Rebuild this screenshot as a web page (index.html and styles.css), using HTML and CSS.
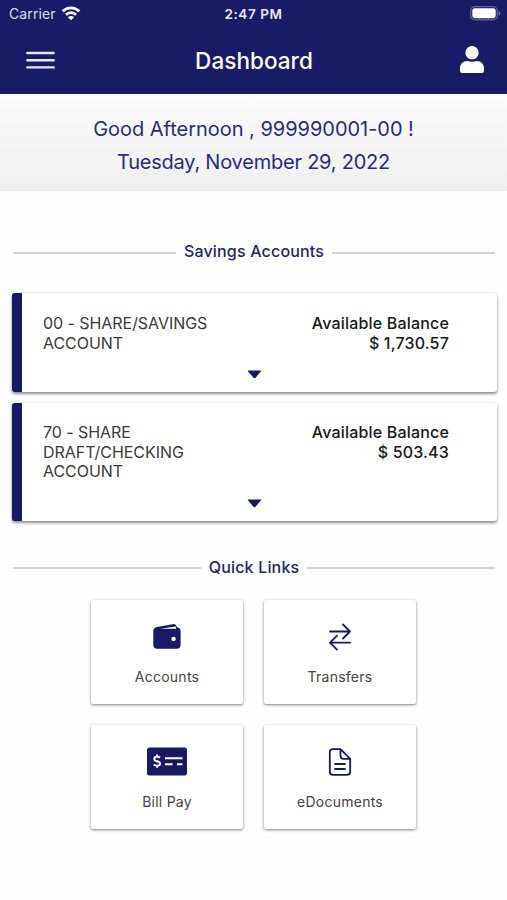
FILE: index.html
```html
<!DOCTYPE html>
<html lang="en">
<head>
<meta charset="utf-8">
<title>Dashboard</title>
<link rel="stylesheet" href="styles.css">
</head>
<body>
<header class="top">
  <div class="status">
    <div class="carrier"><span>Carrier</span>
      <svg class="wifi" width="20" height="15" viewBox="0 0 20 15" fill="none" stroke="currentColor" stroke-width="2.7"><path d="M1.7 5.3A11.8 11.8 0 0 1 18.3 5.3M4.9 8.7A7.2 7.2 0 0 1 15.1 8.7"/><path d="M10 14.3 6.9 11.2A4.4 4.4 0 0 1 13.1 11.2Z" fill="currentColor" stroke="none"/></svg>
    </div>
    <div class="clock">2:47 PM</div>
    <svg class="battery" width="31" height="15" viewBox="0 0 31 15"><rect x=".7" y=".7" width="26.6" height="13.1" rx="4" fill="none" stroke="#66669a" stroke-width="1.2"/><rect x="2.3" y="2.3" width="23.4" height="9.9" rx="2.4" fill="#fff"/><path d="M28.7 5v4.6q1.6-.7 1.6-2.3T28.7 5Z" fill="#77779f"/></svg>
  </div>
  <nav class="bar">
    <svg class="menu" width="29" height="18" viewBox="0 0 29 18" stroke="#e9e9f5" stroke-width="2.4" stroke-linecap="round"><path d="M1.3 2h26.4M1.3 9.200h26.4M1.3 16.400h26.400"/></svg>
    <h1 class="title">Dashboard</h1>
    <svg class="user" width="24" height="27" viewBox="0 0 24 27" fill="#fff"><circle cx="12" cy="6.700" r="6.700"/><path d="M0 24.500v-2.300C0 18 3 14.900 7.200 14.900q4.800 1.500 9.600 0C21 14.900 24 18 24 22.200v2.300Q24 27 21.500 27h-19Q0 27 0 24.500Z"/></svg>
  </nav>
</header>
<section class="greeting">
  <p class="hello">Good Afternoon , 999990001-00 !</p>
  <p class="date">Tuesday, November 29, 2022</p>
</section>
<main>
  <h2 class="divider savings">Savings Accounts</h2>
  <article class="account">
    <div class="row">
      <div class="name">00 - SHARE/SAVINGS<br>ACCOUNT</div>
      <div class="balance">Available Balance<br>$ 1,730.57</div>
    </div>
    <svg class="caret" width="15" height="9" viewBox="0 0 15 9"><path d="M1.500.5h12q1.200 0 .4.900L8.300 7.900q-.8.900-1.600 0L1.100 1.400Q.3.500 1.500.5Z"/></svg>
  </article>
  <article class="account">
    <div class="row">
      <div class="name">70 - SHARE<br>DRAFT/CHECKING<br>ACCOUNT</div>
      <div class="balance">Available Balance<br>$ 503.43</div>
    </div>
    <svg class="caret" width="15" height="9" viewBox="0 0 15 9"><path d="M1.500.5h12q1.200 0 .4.900L8.300 7.900q-.8.900-1.600 0L1.100 1.400Q.3.500 1.500.5Z"/></svg>
  </article>
  <h2 class="divider links">Quick Links</h2>
  <div class="tiles">
    <a class="tile">
      <svg class="icon" width="42" height="30" viewBox="0 0 42 30"><path fill="#181863" d="M7.300 9Q7.300 5.700 11 4.900L26.500 2.200Q30.200 1.600 30.700 5.200H31Q34.600 5.700 34.600 9.500V22.700Q34.600 26.800 30.600 26.800H11.300Q7.300 26.800 7.300 22.700Z"/><path d="M14 6.700 30 4.600V6.700H14Z" fill="#fff"/><circle cx="27.600" cy="17" r="2.200" fill="#fff"/></svg>
      <span>Accounts</span>
    </a>
    <a class="tile">
      <svg class="icon" width="42" height="30" viewBox="0 0 42 30" fill="none" stroke="#181863" stroke-width="1.800" stroke-linecap="round" stroke-linejoin="round"><path d="M11 9.500H31M24 2.500 31 9.500 24 16.500M31 20.700H11M18 13.700 11 20.700 18 27.700"/></svg>
      <span>Transfers</span>
    </a>
    <a class="tile">
      <svg class="icon" width="42" height="30" viewBox="0 0 42 30"><rect x="1" y=".5" width="40" height="28" rx="2.500" fill="#181863"/><g fill="none" stroke="#fff" stroke-width="2"><path d="M14 10.800Q13 9.800 11 9.800 8.300 9.800 8.300 11.900 8.300 13.600 11.100 14.300 14 15 14 16.700 14 18.700 11.100 18.700 9 18.700 7.700 17.500M11.100 7.600V10M11.100 18.500V20.800M19 11.300H36.500M19 17.300H26.500M31 17.300H36.500"/></g></svg>
      <span>Bill Pay</span>
    </a>
    <a class="tile">
      <svg class="icon" width="42" height="30" viewBox="0 0 42 30" fill="none" stroke="#181863" stroke-width="1.800" stroke-linecap="round" stroke-linejoin="round"><path d="M14 2.200H21.500L31.200 11.800V24.500Q31.200 27.800 28 27.800H14Q10.800 27.800 10.800 24.500V5.400Q10.800 2.200 14 2.200ZM21.500 2.200V9Q21.500 11.800 24.300 11.800H31M16 17H26M16 22H26"/></svg>
      <span>eDocuments</span>
    </a>
  </div>
</main>
</body>
</html>
```
FILE: styles.css
```css
* { box-sizing: border-box; }
body {
  margin: 0;
  min-height: 900px;
  background: #fefefe;
  font-family: Inter, "Liberation Sans", sans-serif;
  color: #333;
}
h1, h2, p { margin: 0; font-weight: 500; }
svg { display: block; flex: none; }
.top { height: 94px; background: #1a1b66; color: #fff; }
.status {
  display: grid;
  grid-template-columns: 1fr auto 1fr;
  align-items: center;
  height: 27px;
  padding: 0 6px 0 9px;
}
.carrier {
  display: flex;
  align-items: center;
  gap: 6px;
  font-size: 14px;
  letter-spacing: 0.1px;
  color: #dedeeb;
}
.wifi { color: #fff; margin-left: -1px; }
.clock {
  margin-right: 3px;
  font-size: 13.5px;
  font-weight: 600;
  letter-spacing: 0.6px;
  color: #e9e9f4;
}
.battery { justify-self: end; }
.bar {
  display: grid;
  grid-template-columns: 1fr auto 1fr;
  align-items: center;
  height: 66px;
  padding: 0 23px 0 26px;
}
.title {
  margin-right: 2px;
  font-size: 22.5px;
  font-weight: 500;
  letter-spacing: 0.05px;
  color: #fff;
}
.user { justify-self: end; margin-top: -2px; }
.greeting {
  height: 97px;
  padding-top: 19px;
  background: linear-gradient(#fcfcfc, #efefef);
  text-align: center;
  font-size: 20px;
  line-height: 33px;
  color: #2c2c70;
}
.greeting p { font-weight: 400; }
.hello { letter-spacing: -0.03px; }
.date { letter-spacing: -0.22px; }
main { padding: 0 10px 0 12px; }
.divider {
  display: flex;
  align-items: center;
  gap: 8px;
  margin: 0 2px 0 1px;
  height: 24px;
  font-size: 16px;
  letter-spacing: 0.18px;
  color: #25256b;
}
.divider::before,
.divider::after {
  content: "";
  flex: 1;
  height: 2px;
  margin-top: 3px;
  background: #d5d5d5;
}
.savings { margin-top: 48px; }
.account {
  margin-top: 30px;
  padding: 21px 48px 13px 21px;
  border-left: 10px solid #181863;
  border-radius: 3px;
  background: #fff;
  box-shadow: 0 2px 3px rgba(0, 0, 0, 0.42), 0 0 3px rgba(0, 0, 0, 0.12);
}
.account + .account { margin-top: 11px; padding-top: 20px; }
.row {
  display: flex;
  justify-content: space-between;
  font-size: 16px;
  line-height: 19.500px;
}
.name { color: #3a3a3a; letter-spacing: -0.05px; }
.balance {
  text-align: right;
  font-weight: 500;
  letter-spacing: 0.18px;
  color: #181818;
}
.caret { margin: 17px 0 0 204px; fill: #181863; }
.links { margin-top: 34px; }
.tiles {
  display: grid;
  grid-template-columns: 152px 152px;
  gap: 21px;
  justify-content: center;
  margin: 21px 2px 0 0;
}
.tile {
  display: flex;
  flex-direction: column;
  align-items: center;
  height: 104px;
  padding-top: 22px;
  border-radius: 2px;
  background: #fff;
  box-shadow: 0 1px 3px rgba(0, 0, 0, 0.5);
  font-size: 14px;
  line-height: 18px;
  letter-spacing: 0.25px;
  color: #444;
}
.icon { margin-bottom: 16px; }
```
